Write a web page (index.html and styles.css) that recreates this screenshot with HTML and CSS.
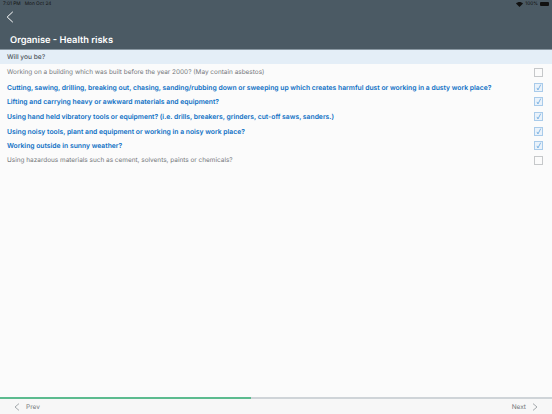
FILE: index.html
```html
<!DOCTYPE html>
<html>
<head>
    <title>Organise - Health risks</title>
    <meta name="viewport" content="width=device-width, initial-scale=1.0">
    <link rel="stylesheet" href="styles.css">
</head>
<body>
    <div id="header">
        <div id="status-bar">
            <span>7:01 PM&nbsp;&nbsp; Mon Oct 24</span>
            <div id="status-right">
                <svg class="wifi" width="7" height="5" viewBox="0 0 7 5"><path d="M0 1.6C2 -.4 5 -.4 7 1.6L3.5 5z" fill="#111"/></svg>
                <span>100%</span>
                <div id="battery"><div id="battery-fill"></div></div>
            </div>
        </div>
        <button id="back">
            <svg width="8" height="12" viewBox="0 0 8 12"><path d="M6.8 .8L1.2 6l5.6 5.2" fill="none" stroke="#fff" stroke-width="1"/></svg>
        </button>
        <h1>Organise - Health risks</h1>
    </div>
    <div id="section-title">Will you be?</div>
    <div id="questions">
        <div class="question">
            <span>Working on a building which was built before the year 2000? (May contain asbestos)</span>
            <div class="check"></div>
        </div>
        <div class="question on">
            <span>Cutting, sawing, drilling, breaking out, chasing, sanding/rubbing down or sweeping up which creates harmful dust or working in a dusty work place?</span>
            <div class="check"><svg width="9" height="9" viewBox="0 0 9 9"><path d="M2.5 5l1.3 2.6L7.4 .8" fill="none" stroke="#3f8fd6" stroke-width=".8"/></svg></div>
        </div>
        <div class="question on">
            <span>Lifting and carrying heavy or awkward materials and equipment?</span>
            <div class="check"><svg width="9" height="9" viewBox="0 0 9 9"><path d="M2.5 5l1.3 2.6L7.4 .8" fill="none" stroke="#3f8fd6" stroke-width=".8"/></svg></div>
        </div>
        <div class="question on">
            <span>Using hand held vibratory tools or equipment? (i.e. drills, breakers, grinders, cut-off saws, sanders.)</span>
            <div class="check"><svg width="9" height="9" viewBox="0 0 9 9"><path d="M2.5 5l1.3 2.6L7.4 .8" fill="none" stroke="#3f8fd6" stroke-width=".8"/></svg></div>
        </div>
        <div class="question on">
            <span>Using noisy tools, plant and equipment or working in a noisy work place?</span>
            <div class="check"><svg width="9" height="9" viewBox="0 0 9 9"><path d="M2.5 5l1.3 2.6L7.4 .8" fill="none" stroke="#3f8fd6" stroke-width=".8"/></svg></div>
        </div>
        <div class="question on">
            <span>Working outside in sunny weather?</span>
            <div class="check"><svg width="9" height="9" viewBox="0 0 9 9"><path d="M2.5 5l1.3 2.6L7.4 .8" fill="none" stroke="#3f8fd6" stroke-width=".8"/></svg></div>
        </div>
        <div class="question">
            <span>Using hazardous materials such as cement, solvents, paints or chemicals?</span>
            <div class="check"></div>
        </div>
    </div>
    <div id="progress"><div id="progress-fill" style="width: 251px;"></div></div>
    <div id="footer">
        <div class="nav">
            <svg width="6" height="8" viewBox="0 0 6 8"><path d="M5 .6L1 4l4 3.4" fill="none" stroke="#8e9499" stroke-width=".8"/></svg>
            <span>Prev</span>
        </div>
        <div class="nav">
            <span>Next</span>
            <svg width="6" height="8" viewBox="0 0 6 8"><path d="M1 .6L5 4 1 7.4" fill="none" stroke="#8e9499" stroke-width=".8"/></svg>
        </div>
    </div>
</body>
</html>
```
FILE: styles.css
```css
html, body {
    height: 100%;
}
body {
    margin: 0;
    display: flex;
    flex-direction: column;
    font-family: Inter, "Liberation Sans", sans-serif;
    text-rendering: geometricPrecision;
    background-color: #fbfbfb;
    color: #75787b;
}
#header {
    height: 49px;
    background-color: #4b5a64;
    border-bottom: 1px solid #8a98a2;
    flex: none;
}
#status-bar {
    display: flex;
    justify-content: space-between;
    align-items: center;
    height: 8px;
    padding: 0 3px;
    font-size: 4.8px;
    color: #111;
}
#status-right {
    display: flex;
    align-items: center;
    gap: 2px;
}
#battery {
    width: 9px;
    height: 4px;
    border-radius: 1px;
    overflow: hidden;
}
#battery-fill {
    height: 100%;
    background-color: #111;
}
#back {
    display: block;
    margin: 3px 0 0 6px;
    padding: 0;
    height: 13px;
    border: none;
    background: none;
}
h1 {
    margin: 10px 0 0 10px;
    font-size: 9.3px;
    line-height: 14px;
    font-weight: 600;
    color: #fff;
}
#section-title {
    flex: none;
    height: 14px;
    line-height: 15px;
    padding-left: 7px;
    font-size: 6.6px;
    font-weight: 500;
    color: #4f565c;
    background-color: #e4eef7;
}
#questions {
    flex: 1;
    padding-top: 1px;
}
.question {
    display: flex;
    justify-content: space-between;
    align-items: center;
    height: 14.7px;
    padding: 0 9px 0 7px;
    font-size: 6.45px;
}
.question.on {
    color: #0d6fc4;
    font-size: 6.79px;
    font-weight: 600;
}
.check {
    display: flex;
    align-items: center;
    justify-content: center;
    flex: none;
    box-sizing: border-box;
    width: 9px;
    height: 9px;
    border: 1px solid #c6c8ca;
}
.question.on .check {
    border-color: #a9cbea;
    background-color: #eaf2fa;
}
#progress {
    flex: none;
    height: 2px;
    background-color: #cfd4d8;
}
#progress-fill {
    height: 100%;
    background-color: #5cbb8f;
}
#footer {
    flex: none;
    display: flex;
    justify-content: space-between;
    align-items: center;
    height: 15px;
    padding: 0 14px;
    background-color: #f7f7f7;
    font-size: 6.5px;
}
.nav {
    display: flex;
    align-items: center;
    gap: 6px;
}
```
